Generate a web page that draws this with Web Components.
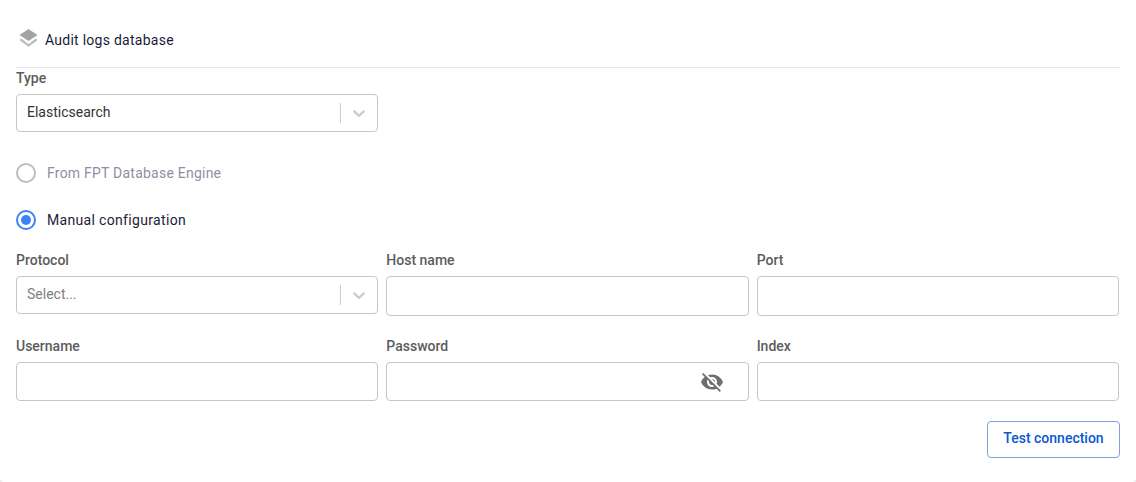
<!DOCTYPE html>
<html>
<head>
<meta charset="utf-8">
<title>Audit logs database</title>
<style>
    html, body { margin: 0; height: 100%; background: #ececee; }
    body { font-family: Roboto, "Liberation Sans", sans-serif; font-size: 14px; color: #1c1c3a; }
</style>
</head>
<body>
<audit-card>
    <section-title slot="title">Audit logs database</section-title>
    <form-field label="Type" narrow>
        <select-box value="Elasticsearch"></select-box>
    </form-field>
    <radio-option disabled>From FPT Database Engine</radio-option>
    <radio-option checked>Manual configuration</radio-option>
    <field-grid>
        <form-field label="Protocol"><select-box placeholder="Select..."></select-box></form-field>
        <form-field label="Host name"><text-box></text-box></form-field>
        <form-field label="Port"><text-box></text-box></form-field>
        <form-field label="Username"><text-box short></text-box></form-field>
        <form-field label="Password"><text-box short secret></text-box></form-field>
        <form-field label="Index"><text-box short></text-box></form-field>
    </field-grid>
    <outline-button>Test connection</outline-button>
</audit-card>

<script>
class AuditCard extends HTMLElement {
    constructor() {
        super();
        this.attachShadow({ mode: 'open' }).innerHTML = `
        <style>
        :host {
            display: block;
            box-sizing: border-box;
            height: 482px;
            background: #fff;
            border-radius: 0 0 4px 4px;
            padding: 16px 16px 0;
        }
        .head { border-bottom: 1px solid #e8e8ea; height: 52px; box-sizing: border-box; }
        </style>
        <div class="head"><slot name="title"></slot></div>
        <slot></slot>
        `;
    }
}

class SectionTitle extends HTMLElement {
    constructor() {
        super();
        this.attachShadow({ mode: 'open' }).innerHTML = `
        <style>
        :host { display: flex; align-items: center; height: 48px; color: #1c1c3a; font-size: 14px; letter-spacing: 0.26px; }
        svg { width: 20px; height: 20px; margin: -4px 7px 0 2px; flex: none; }
        </style>
        <svg viewBox="0 0 20 20">
            <path d="M10.5 1 19.5 6.9 10.5 13 1.5 6.9Z" fill="#a3a3a3"/>
            <path d="M3.2 10.6 1.5 11.9 10.5 18.8 19.5 11.9 17.8 10.6 10.5 16.2Z" fill="#b8b8b8"/>
        </svg>
        <slot></slot>
        `;
    }
}

class FormField extends HTMLElement {
    constructor() {
        super();
        this.attachShadow({ mode: 'open' }).innerHTML = `
        <style>
        :host { display: block; min-width: 0; }
        :host([narrow]) { width: 362px; }
        label {
            display: block;
            height: 26px;
            line-height: 20px;
            font-size: 14px;
            font-weight: 500;
            color: #5c5c5c;
        }
        </style>
        <label></label>
        <slot></slot>
        `;
    }
    connectedCallback() {
        this.shadowRoot.querySelector('label').textContent = this.getAttribute('label');
    }
}

class SelectBox extends HTMLElement {
    constructor() {
        super();
        this.attachShadow({ mode: 'open' }).innerHTML = `
        <style>
        :host {
            display: flex;
            align-items: center;
            box-sizing: border-box;
            height: 38px;
            background: #fff;
            border: 1px solid #c6c6c6;
            border-radius: 4px;
            font-size: 14px;
        }
        .text { flex: 1; padding-left: 10px; position: relative; top: -1px; color: #333; }
        .text.empty { color: #808080; }
        .sep { width: 1px; height: 20px; background: #cccccc; }
        svg { width: 20px; height: 20px; margin: 0 8px; fill: #cccccc; }
        </style>
        <span class="text"></span>
        <span class="sep"></span>
        <svg viewBox="0 0 20 20"><path d="M4.516 7.548c.436-.446 1.043-.481 1.576 0L10 11.295l3.908-3.747c.533-.481 1.141-.446 1.574 0 .436.445.408 1.197 0 1.615-.406.418-4.695 4.502-4.695 4.502a1.095 1.095 0 0 1-1.576 0S4.924 9.581 4.516 9.163c-.409-.418-.436-1.17 0-1.615z"/></svg>
        `;
    }
    connectedCallback() {
        const text = this.shadowRoot.querySelector('.text');
        const value = this.getAttribute('value');
        text.textContent = value || this.getAttribute('placeholder');
        text.classList.toggle('empty', !value);
    }
}

class TextBox extends HTMLElement {
    constructor() {
        super();
        this.attachShadow({ mode: 'open' }).innerHTML = `
        <style>
        :host {
            display: flex;
            align-items: center;
            justify-content: flex-end;
            box-sizing: border-box;
            height: 40px;
            background: #fff;
            border: 1px solid #c6c6c6;
            border-radius: 4px;
        }
        :host([short]) { height: 39px; }
        svg { width: 24px; height: 24px; margin-right: 24px; fill: #6f6f6f; display: none; }
        :host([secret]) svg { display: block; }
        </style>
        <svg viewBox="0 0 24 24"><path d="M12 7c2.76 0 5 2.24 5 5 0 .65-.13 1.26-.36 1.83l2.92 2.92c1.51-1.26 2.7-2.89 3.43-4.75-1.73-4.39-6-7.5-11-7.5-1.4 0-2.74.25-3.98.7l2.16 2.16C10.74 7.13 11.35 7 12 7zM2 4.27l2.28 2.28.46.46C3.08 8.3 1.78 10.02 1 12c1.73 4.39 6 7.5 11 7.5 1.55 0 3.03-.3 4.38-.84l.42.42L19.73 22 21 20.73 3.27 3 2 4.27zM7.53 9.8l1.55 1.55c-.05.21-.08.43-.08.65 0 1.66 1.34 3 3 3 .22 0 .44-.03.65-.08l1.55 1.55c-.67.33-1.41.53-2.2.53-2.76 0-5-2.24-5-5 0-.79.2-1.53.53-2.2zm4.31-.78 3.15 3.15.02-.16c0-1.66-1.34-3-3-3l-.17.01z"/></svg>
        `;
    }
}

class RadioOption extends HTMLElement {
    constructor() {
        super();
        this.attachShadow({ mode: 'open' }).innerHTML = `
        <style>
        :host {
            display: flex;
            align-items: center;
            gap: 11px;
            height: 20px;
            margin-top: 27px;
            font-size: 14px;
            letter-spacing: 0.33px;
            color: #1c1c3a;
        }
        :host([disabled]) { margin-top: 31px; color: #8f8fa3; letter-spacing: 0.23px; }
        .dot {
            box-sizing: border-box;
            width: 20px;
            height: 20px;
            border-radius: 50%;
            background: #fff;
            border: 2px solid #3b82f6;
            padding: 3px;
        }
        .dot::after { content: ""; display: block; width: 10px; height: 10px; border-radius: 50%; background: #3b82f6; }
        :host([disabled]) .dot { border-color: #bdbdbd; }
        :host([disabled]) .dot::after { display: none; }
        </style>
        <span class="dot"></span>
        <slot></slot>
        `;
    }
}

class FieldGrid extends HTMLElement {
    constructor() {
        super();
        this.attachShadow({ mode: 'open' }).innerHTML = `
        <style>
        :host {
            display: grid;
            grid-template-columns: repeat(3, 1fr);
            column-gap: 8px;
            row-gap: 20px;
            margin-top: 20px;
            margin-right: 1px;
        }
        </style>
        <slot></slot>
        `;
    }
}

class OutlineButton extends HTMLElement {
    constructor() {
        super();
        this.attachShadow({ mode: 'open' }).innerHTML = `
        <style>
        :host { display: flex; justify-content: flex-end; margin-top: 20px; }
        button {
            box-sizing: border-box;
            width: 133px;
            height: 37px;
            padding: 0 0 3px;
            background: #fff;
            border: 1px solid #7f9fdc;
            border-radius: 4px;
            color: #0b57d0;
            font: 500 14px Roboto, "Liberation Sans", sans-serif;
        }
        </style>
        <button type="button"><slot></slot></button>
        `;
    }
}

customElements.define('audit-card', AuditCard);
customElements.define('section-title', SectionTitle);
customElements.define('form-field', FormField);
customElements.define('select-box', SelectBox);
customElements.define('text-box', TextBox);
customElements.define('radio-option', RadioOption);
customElements.define('field-grid', FieldGrid);
customElements.define('outline-button', OutlineButton);
</script>
</body>
</html>
